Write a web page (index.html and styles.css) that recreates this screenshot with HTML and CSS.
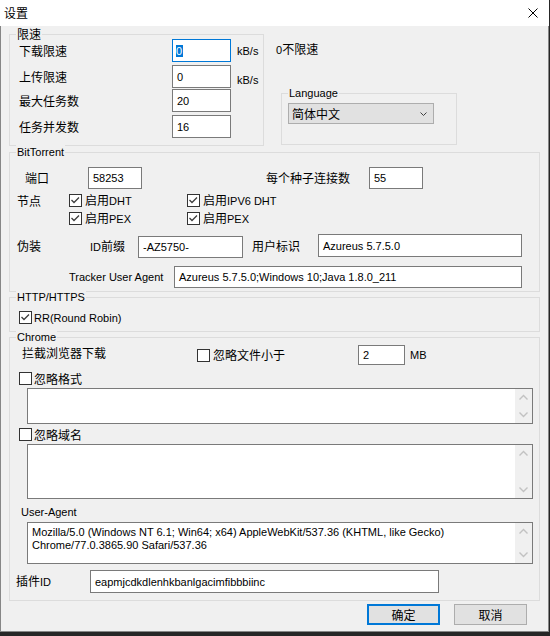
FILE: index.html
```html
<!DOCTYPE html>
<html lang="zh-CN">
<head>
<meta charset="utf-8">
<title>设置</title>
<link rel="stylesheet" href="styles.css">
</head>
<body>
<div class="window">
  <div class="titlebar">
    <span class="title">设置</span>
    <svg class="close" width="10" height="10" viewBox="0 0 10 10"><path d="M0.5 0.5 L9.5 9.5 M9.5 0.5 L0.5 9.5"/></svg>
  </div>
  <div class="client">
    <div class="top-row">
      <div class="group g-speed">
        <span class="gtitle">限速</span>
        <div class="srow">
          <span class="lbl">下载限速</span>
          <div class="tb w59 focus"><span class="sel">0</span></div>
          <span class="unit en">kB/s</span>
        </div>
        <div class="srow">
          <span class="lbl">上传限速</span>
          <div class="tb w59">0</div>
          <span class="unit low en">kB/s</span>
        </div>
        <div class="srow r3">
          <span class="lbl">最大任务数</span>
          <div class="tb w59">20</div>
        </div>
        <div class="srow">
          <span class="lbl">任务并发数</span>
          <div class="tb w59">16</div>
        </div>
      </div>
      <div class="top-right">
        <div class="hint"><span class="en">0</span>不限速</div>
        <div class="group g-lang">
          <span class="gtitle en">Language</span>
          <div class="combo">
            <span>简体中文</span>
            <svg width="7" height="4" viewBox="0 0 7 4"><path d="M0.5 0.5 L3.5 3.5 L6.5 0.5"/></svg>
          </div>
        </div>
      </div>
    </div>

    <div class="group g-bt">
      <span class="gtitle en">BitTorrent</span>
      <div class="bt-r1">
        <span class="port-lbl">端口</span>
        <div class="tb w54">58253</div>
        <span class="conn-lbl">每个种子连接数</span>
        <div class="tb w54">55</div>
      </div>
      <div class="nodes">
        <span class="nodes-lbl">节点</span>
        <label class="cbi"><span class="cb"><svg viewBox="0 0 11 11"><path d="M1.5 5 L4 7.5 L9 2.5"/></svg></span><span>启用<span class="en">DHT</span></span></label>
        <label class="cbi"><span class="cb"><svg viewBox="0 0 11 11"><path d="M1.5 5 L4 7.5 L9 2.5"/></svg></span><span>启用<span class="en">IPV6 DHT</span></span></label>
        <span></span>
        <label class="cbi"><span class="cb"><svg viewBox="0 0 11 11"><path d="M1.5 5 L4 7.5 L9 2.5"/></svg></span><span>启用<span class="en">PEX</span></span></label>
        <label class="cbi"><span class="cb"><svg viewBox="0 0 11 11"><path d="M1.5 5 L4 7.5 L9 2.5"/></svg></span><span>启用<span class="en">PEX</span></span></label>
      </div>
      <div class="disg-row">
        <span class="disg-lbl">伪装</span>
        <span class="id-lbl"><span class="en">ID</span>前缀</span>
        <div class="tb w105">-AZ5750-</div>
        <span class="uid-lbl">用户标识</span>
        <div class="tb w204">Azureus 5.7.5.0</div>
      </div>
      <div class="tracker-row">
        <span class="tracker-lbl en">Tracker User Agent</span>
        <div class="tb w348">Azureus 5.7.5.0;Windows 10;Java 1.8.0_211</div>
      </div>
    </div>

    <div class="group g-http">
      <span class="gtitle en">HTTP/HTTPS</span>
      <label class="cbi"><span class="cb"><svg viewBox="0 0 11 11"><path d="M1.5 5 L4 7.5 L9 2.5"/></svg></span><span class="tight en">RR(Round Robin)</span></label>
    </div>

    <div class="group g-chrome">
      <span class="gtitle en">Chrome</span>
      <div class="ch-r1">
        <span class="intercept">拦截浏览器下载</span>
        <label class="cbi size-cb"><span class="cb"></span><span>忽略文件小于</span></label>
        <div class="tb w47">2</div>
        <span class="mb en">MB</span>
      </div>
      <label class="cbi ch-cb first"><span class="cb"></span><span class="tight">忽略格式</span></label>
      <div class="ta ta1">
        <div class="ta-body"></div>
        <div class="sb">
          <svg viewBox="0 0 17 17"><path d="M4.5 10.5 L8.5 6.5 L12.5 10.5"/></svg>
          <svg viewBox="0 0 17 17"><path d="M4.5 6.5 L8.5 10.5 L12.5 6.5"/></svg>
        </div>
      </div>
      <label class="cbi ch-cb second"><span class="cb"></span><span class="tight">忽略域名</span></label>
      <div class="ta ta2">
        <div class="ta-body"></div>
        <div class="sb">
          <svg viewBox="0 0 17 17"><path d="M4.5 10.5 L8.5 6.5 L12.5 10.5"/></svg>
          <svg viewBox="0 0 17 17"><path d="M4.5 6.5 L8.5 10.5 L12.5 6.5"/></svg>
        </div>
      </div>
      <div class="ua-title en">User-Agent</div>
      <div class="ta ta3">
        <div class="ta-body">
          <div class="ta-line">Mozilla/5.0 (Windows NT 6.1; Win64; x64) AppleWebKit/537.36 (KHTML, like Gecko)</div>
          <div class="ta-line">Chrome/77.0.3865.90 Safari/537.36</div>
        </div>
        <div class="sb">
          <svg viewBox="0 0 17 17"><path d="M4.5 10.5 L8.5 6.5 L12.5 10.5"/></svg>
          <svg viewBox="0 0 17 17"><path d="M4.5 6.5 L8.5 10.5 L12.5 6.5"/></svg>
        </div>
      </div>
      <div class="plugin-row">
        <span class="plugin-lbl">插件<span class="en">ID</span></span>
        <div class="tb w349">eapmjcdkdlenhkbanlgacimfibbbiinc</div>
      </div>
    </div>

    <div class="buttons">
      <div class="btn default">确定</div>
      <div class="btn">取消</div>
    </div>
  </div>
</div>
</body>
</html>
```

FILE: styles.css
```css
* {
  box-sizing: border-box;
}

body {
  margin: 0;
  background: #262626;
  font-family: "Noto Sans CJK SC", "Noto Sans", sans-serif;
  font-size: 12px;
  line-height: 14px;
  color: #000;
}

.en {
  font-family: "Liberation Sans", "Noto Sans CJK SC", sans-serif;
  font-size: 11px;
}

.window {
  width: 549px;
  height: 632px;
  background: #f0f0f0;
  display: flex;
  flex-direction: column;
}

.titlebar {
  height: 26px;
  flex: none;
  background: #fff;
  display: flex;
  align-items: center;
  justify-content: space-between;
  padding: 0 11px 0 4px;
}

.close path {
  stroke: #000;
  stroke-width: 1;
  fill: none;
}

.client {
  flex: 1;
  border: 1px solid #868686;
  border-top: 0;
  padding: 0 8px;
}

.top-row {
  display: flex;
  align-items: flex-start;
}

.group {
  position: relative;
  border: 1px solid #dcdcdc;
}

.gtitle {
  position: absolute;
  top: -8px;
  left: 6px;
  padding: 0 1px;
  background: #f0f0f0;
  line-height: 14px;
  white-space: nowrap;
}

/* text boxes */
.tb {
  background: #fff;
  border: 1px solid #7a7a7a;
  padding: 0 4px;
  display: flex;
  align-items: center;
  white-space: nowrap;
  overflow: hidden;
  flex: none;
  font-family: "Liberation Sans", "Noto Sans CJK SC", sans-serif;
  font-size: 11px;
}

.tb.focus {
  border-color: #0078d7;
  padding-left: 3px;
}

.sel {
  background: #0078d7;
  color: #fff;
  line-height: 12px;
  padding: 0 1px 0 0;
}

.w59 { width: 59px; height: 23px; }
.w54 { width: 54px; height: 22px; }
.w105 { width: 105px; height: 22px; margin-top: 2px; }
.w204 { width: 204px; height: 23px; align-self: flex-start; }
.w348 { width: 348px; height: 22px; }
.w47 { width: 47px; height: 20px; }
.w349 { width: 349px; height: 23px; }

/* speed group */
.g-speed {
  width: 255px;
  height: 112px;
  margin-top: 8px;
  padding: 4px 0 0 9px;
  flex: none;
}

.srow {
  display: flex;
  align-items: center;
  height: 23px;
}

.srow + .srow {
  margin-top: 3px;
}

.srow.r3 {
  margin-top: 1px;
}

.srow .lbl {
  width: 153px;
}

.unit {
  margin-left: 6px;
}

.unit.low {
  margin-top: 6px;
}

.top-right {
  margin-left: 12px;
  display: flex;
  flex-direction: column;
}

.hint {
  margin-top: 16px;
}

.g-lang {
  margin: 36px 0 0 5px;
  width: 176px;
  height: 52px;
  padding: 9px 0 0 6px;
}

.combo {
  width: 146px;
  height: 21px;
  background: #e1e1e1;
  border: 1px solid #adadad;
  display: flex;
  align-items: center;
  justify-content: space-between;
  padding: 0 6px 0 3px;
}

.combo path {
  stroke: #404040;
  stroke-width: 1;
  fill: none;
}

/* BitTorrent */
.g-bt {
  margin-top: 6px;
  height: 140px;
}

.bt-r1 {
  display: flex;
  align-items: center;
  margin-top: 14px;
}

.port-lbl {
  margin-left: 15px;
  width: 63px;
}

.conn-lbl {
  margin-left: 124px;
  width: 103px;
  white-space: nowrap;
}

.nodes {
  display: grid;
  grid-template-columns: 52px 118px auto;
  grid-auto-rows: 13px;
  row-gap: 5px;
  margin-top: 5px;
  padding-left: 7px;
  align-items: center;
}

.nodes-lbl {
  line-height: 13px;
}

/* checkboxes */
.cbi {
  display: flex;
  align-items: center;
  height: 13px;
  white-space: nowrap;
}

.cbi > span:last-child {
  margin-left: 3px;
}

.cbi > span.tight {
  margin-left: 2px;
}

.cb {
  width: 13px;
  height: 13px;
  flex: none;
  border: 1px solid #333;
  background: #fff;
  display: block;
}

.cb svg {
  display: block;
  width: 11px;
  height: 11px;
}

.cb path {
  stroke: #3c3c3c;
  stroke-width: 1.3;
  fill: none;
}

.disg-row {
  display: flex;
  align-items: center;
  height: 24px;
  margin-top: 9px;
}

.disg-lbl {
  margin-left: 7px;
  width: 73px;
}

.id-lbl {
  width: 48px;
}

.uid-lbl {
  margin-left: 9px;
  width: 66px;
}

.tracker-row {
  display: flex;
  align-items: center;
  margin-top: 8px;
  margin-left: 59px;
}

.tracker-lbl {
  width: 105px;
  white-space: nowrap;
}

/* HTTP */
.g-http {
  margin-top: 5px;
  height: 35px;
  padding: 13px 0 0 9px;
}

/* Chrome */
.g-chrome {
  margin-top: 5px;
  height: 264px;
  padding-top: 7px;
}

.ch-r1 {
  display: flex;
  align-items: center;
  height: 20px;
}

.intercept {
  margin-left: 12px;
  width: 175px;
  margin-bottom: 4px;
}

.size-cb {
  width: 161px;
}

.mb {
  margin-left: 5px;
}

.ch-cb {
  margin-left: 9px;
}

.ch-cb.first {
  margin-top: 7px;
}

.ch-cb.second {
  margin-top: 4px;
}

.ta {
  margin: 3px 0 0 17px;
  width: 506px;
  background: #fff;
  border: 1px solid #7a7a7a;
  display: flex;
}

.ta1 { height: 36px; }
.ta2 { height: 55px; }
.ta3 { height: 42px; }

.ta-body {
  flex: 1;
  padding: 3px 4px;
  font-family: "Liberation Sans", "Noto Sans CJK SC", sans-serif;
  font-size: 11px;
  line-height: 13px;
  white-space: nowrap;
  overflow: hidden;
}

.sb {
  width: 17px;
  flex: none;
  background: #f0f0f0;
  display: flex;
  flex-direction: column;
  justify-content: space-between;
}

.sb svg {
  display: block;
  width: 17px;
  height: 17px;
}

.sb path {
  stroke: #c2c2c2;
  stroke-width: 1.4;
  fill: none;
}

.ua-title {
  margin: 6px 0 0 11px;
  line-height: 14px;
}

.plugin-row {
  display: flex;
  align-items: center;
  margin-top: 6px;
}

.plugin-lbl {
  margin-left: 6px;
  width: 74px;
}

/* buttons */
.buttons {
  display: flex;
  justify-content: flex-end;
  gap: 14px;
  margin-top: 3px;
  padding-right: 13px;
}

.btn {
  width: 73px;
  height: 21px;
  background: #e1e1e1;
  border: 1px solid #adadad;
  display: flex;
  align-items: center;
  justify-content: center;
}

.btn.default {
  border: 2px solid #0078d7;
}
```
